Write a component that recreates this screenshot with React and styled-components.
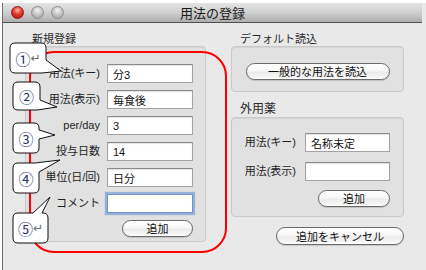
import React from "react";
import styled, { createGlobalStyle } from "styled-components";

const Global = createGlobalStyle`
  html, body { margin: 0; padding: 0; background: #ffffff; }
  body { font-family: "Liberation Sans", "Noto Sans CJK JP", sans-serif; }
  * { box-sizing: border-box; }
`;

const Page = styled.div`
  position: relative;
  width: 426px;
  height: 270px;
  overflow: hidden;
  padding: 3px 0 0 2px;
`;

const Window = styled.div`
  height: 267px;
  background: #e9e9e9;
  border-left: 1px solid #6f6f6f;
  display: flex;
  flex-direction: column;
`;

const TitleBar = styled.div`
  position: relative;
  height: 20px;
  margin-right: 4px;
  background: linear-gradient(to bottom, #e4e4e4 0%, #cfcfcf 50%, #aeaeae 100%);
  border-bottom: 1px solid #515151;
  display: flex;
  align-items: center;
  justify-content: center;
`;

const Lights = styled.div`
  position: absolute;
  left: 8px;
  top: 3px;
  display: flex;
  gap: 7px;
`;

const Light = styled.span`
  width: 13px;
  height: 13px;
  border-radius: 50%;
  border: 1px solid ${(p) => (p.$red ? "#8a1a1a" : "#8e8e8e")};
  background: ${(p) =>
    p.$red
      ? "radial-gradient(circle at 50% 30%, #ffb3a8 0%, #e3392b 45%, #a3120c 100%)"
      : "radial-gradient(circle at 50% 30%, #f4f4f4 0%, #c4c4c4 50%, #9c9c9c 100%)"};
`;

const Title = styled.div`
  font-family: "Noto Sans CJK JP", sans-serif;
  font-size: 13px;
  color: #1a1a1a;
  line-height: 18px;
`;

const Content = styled.div`
  display: flex;
  gap: 25px;
  padding: 8px 0 0 22px;
`;

const Column = styled.div`
  width: ${(p) => p.$w}px;
  display: flex;
  flex-direction: column;
`;

const GroupLabel = styled.div`
  font-family: "Noto Sans CJK JP", sans-serif;
  font-size: ${(p) => p.$size || 11}px;
  color: #2a2a2a;
  line-height: 14px;
  height: 14px;
  padding-left: ${(p) => p.$indent || 7}px;
  margin-top: ${(p) => p.$mt || 0}px;
  margin-bottom: ${(p) => p.$mb || 1}px;
`;

const GroupBox = styled.div`
  height: ${(p) => p.$h}px;
  background: #e1e1e1;
  border: 1px solid #c9c9c9;
  border-radius: 4px;
  box-shadow: inset 0 1px 1px rgba(0, 0, 0, 0.06);
  padding: ${(p) => p.$pad};
  display: flex;
  flex-direction: column;
  align-items: ${(p) => p.$align || "stretch"};
`;

const FormGrid = styled.div`
  display: grid;
  grid-template-columns: 1fr ${(p) => p.$field}px;
  grid-auto-rows: 19px;
  column-gap: ${(p) => p.$cgap}px;
  row-gap: ${(p) => p.$rgap}px;
`;

const Label = styled.div`
  font-family: "Liberation Sans", "Noto Sans CJK JP", sans-serif;
  font-size: 11px;
  color: #1e1e1e;
  text-align: right;
  white-space: nowrap;
  line-height: 19px;
`;

const Field = styled.input`
  width: 100%;
  height: 19px;
  margin: 0;
  padding: 0 0 0 5px;
  font-family: "Liberation Sans", "Noto Sans CJK JP", sans-serif;
  font-size: 11px;
  color: #111;
  background: #fff;
  border: 1px solid ${(p) => (p.$focus ? "#6f93c8" : "#a3a3a3")};
  border-top-color: ${(p) => (p.$focus ? "#6f93c8" : "#8a8a8a")};
  outline: none;
  box-shadow: ${(p) =>
    p.$focus
      ? "0 0 1px 2px rgba(110, 150, 210, 0.65)"
      : "inset 0 1px 1px rgba(0,0,0,0.12)"};
`;

const ButtonRow = styled.div`
  display: flex;
  justify-content: ${(p) => p.$justify || "flex-end"};
  margin-top: ${(p) => p.$mt || 0}px;
`;

const Pill = styled.button`
  width: ${(p) => p.$w}px;
  height: ${(p) => p.$h || 17}px;
  margin: 0;
  padding: 0;
  border: 1px solid #6a6a6a;
  border-radius: 9px;
  background: linear-gradient(
    to bottom,
    #ffffff 0%,
    #f7f7f7 45%,
    #ebebeb 55%,
    #f5f5f5 85%,
    #ffffff 100%
  );
  box-shadow: 0 1px 1px rgba(0, 0, 0, 0.15);
  font-family: "Noto Sans CJK JP", sans-serif;
  font-size: 11px;
  color: #111;
  line-height: 15px;
`;

const Overlay = styled.svg`
  position: absolute;
  left: 0;
  top: 0;
  pointer-events: none;
`;

const Tag = styled.div`
  position: absolute;
  left: ${(p) => p.$x}px;
  top: ${(p) => p.$y}px;
  width: ${(p) => p.$w}px;
  height: ${(p) => p.$h}px;
  display: flex;
  align-items: center;
  justify-content: center;
  font-family: "DejaVu Sans", "Noto Sans CJK JP", sans-serif;
  line-height: 1;
`;

const Num = styled.span`
  color: #25306a;
  font-family: "Noto Sans CJK JP", "DejaVu Sans", sans-serif;
  font-size: 15px;
`;

const Ret = styled.span`
  color: #6a6a6a;
  font-family: "DejaVu Sans", sans-serif;
  font-size: 12px;
  margin-left: 0;
`;

const leftRows = [
  ["用法(キー)", "分3"],
  ["用法(表示)", "毎食後"],
  ["per/day", "3"],
  ["投与日数", "14"],
  ["単位(日/回)", "日分"],
  ["コメント", "", true],
];

const rightRows = [
  ["用法(キー)", "名称未定"],
  ["用法(表示)", ""],
];

const bubbles = [
  "M15,43 H41 Q46,43 46,48 V60 L61,71 L42,73 H15 Q10,73 10,68 V48 Q10,43 15,43 Z",
  "M18,82 H35 Q40,82 40,87 V100 L57,107 L37,110 H18 Q13,110 13,105 V87 Q13,82 18,82 Z",
  "M18,123 H34 Q39,123 39,128 V130 L55,135 L39,139 V148 Q39,153 34,153 H18 Q13,153 13,148 V128 Q13,123 18,123 Z",
  "M18,163 H35 L60,160 L39,172 V188 Q39,193 34,193 H18 Q13,193 13,188 V168 Q13,163 18,163 Z",
  "M18,213 H33 L50,197 L42,213 H43 Q48,213 48,218 V238 Q48,243 43,243 H18 Q13,243 13,238 V218 Q13,213 18,213 Z",
];

const tags = [
  { x: 10, y: 43, w: 36, h: 30, n: "①", ret: true },
  { x: 13, y: 82, w: 27, h: 28, n: "②" },
  { x: 13, y: 123, w: 26, h: 30, n: "③" },
  { x: 13, y: 163, w: 26, h: 30, n: "④" },
  { x: 13, y: 213, w: 35, h: 30, n: "⑤", ret: true },
];

export default function App() {
  return (
    <>
      <Global />
      <Page>
        <Window>
          <TitleBar>
            <Lights>
              <Light $red />
              <Light />
              <Light />
            </Lights>
            <Title>用法の登録</Title>
          </TitleBar>
          <Content>
            <Column $w={181}>
              <GroupLabel>新規登録</GroupLabel>
              <GroupBox $h={196} $pad="17px 12px 0 6px">
                <FormGrid $field={86} $cgap={7} $rgap={7}>
                  {leftRows.map(([l, v, f]) => (
                    <React.Fragment key={l}>
                      <Label>{l}</Label>
                      <Field readOnly value={v} $focus={f} />
                    </React.Fragment>
                  ))}
                </FormGrid>
                <ButtonRow $mt={7}>
                  <Pill $w={71}>追加</Pill>
                </ButtonRow>
              </GroupBox>
            </Column>
            <Column $w={173}>
              <GroupLabel $indent={9}>デフォルト読込</GroupLabel>
              <GroupBox $h={46} $pad="16px 0 0 0" $align="center">
                <Pill $w={144}>一般的な用法を読込</Pill>
              </GroupBox>
              <GroupLabel $indent={9} $size={12} $mt={9} $mb={2}>
                外用薬
              </GroupLabel>
              <GroupBox $h={100} $pad="15px 13px 0 6px">
                <FormGrid $field={85} $cgap={9} $rgap={10}>
                  {rightRows.map(([l, v]) => (
                    <React.Fragment key={l}>
                      <Label>{l}</Label>
                      <Field readOnly value={v} />
                    </React.Fragment>
                  ))}
                </FormGrid>
                <ButtonRow $mt={9}>
                  <Pill $w={72}>追加</Pill>
                </ButtonRow>
              </GroupBox>
              <ButtonRow $mt={10}>
                <Pill $w={128} $h={18}>
                  追加をキャンセル
                </Pill>
              </ButtonRow>
            </Column>
          </Content>
        </Window>

        <Overlay width="426" height="270" viewBox="0 0 426 270">
          <rect
            x="30"
            y="52"
            width="196"
            height="200"
            rx="24"
            ry="24"
            fill="none"
            stroke="#ff0000"
            strokeWidth="2"
          />
          {bubbles.map((d, i) => (
            <path key={i} d={d} fill="#ffffff" stroke="#111" strokeWidth="1" />
          ))}
        </Overlay>
        {tags.map((t) => (
          <Tag key={t.n} $x={t.x} $y={t.y} $w={t.w} $h={t.h}>
            <Num>{t.n}</Num>
            {t.ret && <Ret>↵</Ret>}
          </Tag>
        ))}
      </Page>
    </>
  );
}
